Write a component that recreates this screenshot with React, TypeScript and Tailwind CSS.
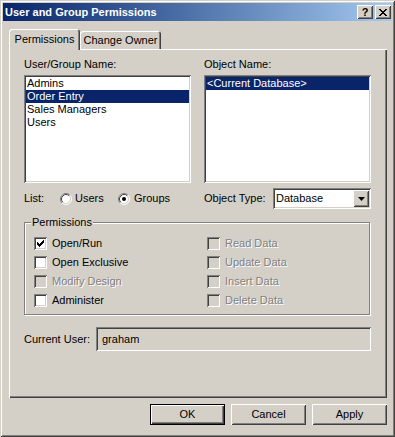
import React from "react";

const sunken =
  "shadow-[inset_1px_1px_0_#808080,inset_-1px_-1px_0_#ffffff,inset_2px_2px_0_#404040,inset_-2px_-2px_0_#d4d0c8]";
const raised =
  "shadow-[inset_1px_1px_0_#ffffff,inset_-1px_-1px_0_#404040,inset_2px_2px_0_#d4d0c8,inset_-2px_-2px_0_#808080]";
const disabledText = "text-[#808080] [text-shadow:1px_1px_0_#ffffff]";

function CheckMark() {
  return (
    <svg width="7" height="7" viewBox="0 0 7 7" shapeRendering="crispEdges">
      <rect x="6" y="0" width="1" height="1" />
      <rect x="5" y="1" width="2" height="1" />
      <rect x="0" y="2" width="1" height="1" />
      <rect x="4" y="2" width="3" height="1" />
      <rect x="0" y="3" width="2" height="1" />
      <rect x="3" y="3" width="3" height="1" />
      <rect x="0" y="4" width="5" height="1" />
      <rect x="1" y="5" width="3" height="1" />
      <rect x="2" y="6" width="1" height="1" />
    </svg>
  );
}

function CloseGlyph() {
  return (
    <svg width="8" height="7" viewBox="0 0 8 7" shapeRendering="crispEdges">
      <rect x="0" y="0" width="2" height="1" />
      <rect x="6" y="0" width="2" height="1" />
      <rect x="1" y="1" width="2" height="1" />
      <rect x="5" y="1" width="2" height="1" />
      <rect x="2" y="2" width="4" height="1" />
      <rect x="3" y="3" width="2" height="1" />
      <rect x="2" y="4" width="4" height="1" />
      <rect x="1" y="5" width="2" height="1" />
      <rect x="5" y="5" width="2" height="1" />
      <rect x="0" y="6" width="2" height="1" />
      <rect x="6" y="6" width="2" height="1" />
    </svg>
  );
}

function Radio({ checked }: { checked?: boolean }) {
  return (
    <svg width="12" height="12" viewBox="0 0 12 12">
      <circle cx="6" cy="6" r="5" fill="#ffffff" />
      <path d="M2.11 9.89 A5.5 5.5 0 0 1 9.89 2.11" fill="none" stroke="#808080" />
      <path d="M9.89 2.11 A5.5 5.5 0 0 1 2.11 9.89" fill="none" stroke="#ffffff" />
      <path d="M2.82 9.18 A4.5 4.5 0 0 1 9.18 2.82" fill="none" stroke="#404040" />
      <path d="M9.18 2.82 A4.5 4.5 0 0 1 2.82 9.18" fill="none" stroke="#d4d0c8" />
      {checked && <circle cx="6" cy="6" r="2" fill="#000000" />}
    </svg>
  );
}

function Check({
  label,
  checked,
  disabled,
}: {
  label: string;
  checked?: boolean;
  disabled?: boolean;
}) {
  return (
    <div className="flex h-[19px] items-center gap-[5px]">
      <div
        className={`flex h-[13px] w-[13px] items-center justify-center ${sunken} ${
          disabled ? "bg-[#d4d0c8]" : "bg-white"
        }`}
      >
        {checked && <CheckMark />}
      </div>
      <span className={disabled ? disabledText : ""}>{label}</span>
    </div>
  );
}

function ListRow({ text, selected }: { text: string; selected?: boolean }) {
  return (
    <div
      className={`h-[13px] px-[1px] whitespace-nowrap ${
        selected ? "bg-[#0a246a] text-white" : ""
      }`}
    >
      {text}
    </div>
  );
}

function PushButton({ label, isDefault }: { label: string; isDefault?: boolean }) {
  return (
    <div
      className={`flex h-[21px] w-[75px] items-center justify-center ${
        isDefault
          ? "shadow-[inset_0_0_0_1px_#000000,inset_2px_2px_0_#ffffff,inset_-2px_-2px_0_#404040,inset_-3px_-3px_0_#808080]"
          : raised
      }`}
    >
      {label}
    </div>
  );
}

export default function App() {
  return (
    <div className="flex h-[437px] w-[395px] flex-col bg-[#d4d0c8] p-[3px] text-[11px] leading-[13px] text-black [font-family:'Liberation_Sans',Arial,sans-serif] shadow-[inset_1px_1px_0_#d4d0c8,inset_-1px_-1px_0_#404040,inset_2px_2px_0_#ffffff,inset_-2px_-2px_0_#808080]">
      {/* title bar */}
      <div className="flex h-[18px] items-center bg-linear-to-r from-[#0a246a] to-[#a6caf0] pl-[2px] pr-[1px]">
        <span className="flex-1 font-bold text-white">User and Group Permissions</span>
        <div className="flex gap-[2px]">
          <div className={`flex h-[14px] w-[16px] items-center justify-center bg-[#d4d0c8] font-bold leading-none ${raised}`}>
            ?
          </div>
          <div className={`flex h-[14px] w-[16px] items-center justify-center bg-[#d4d0c8] ${raised}`}>
            <CloseGlyph />
          </div>
        </div>
      </div>

      {/* tabs */}
      <div className="ml-[6px] mt-[8px] flex h-[20px] items-end">
        <div className="relative z-10 -mb-px flex h-[21px] w-[71px] items-center justify-center rounded-t-[3px] bg-[#d4d0c8] shadow-[inset_1px_1px_0_#ffffff,inset_-1px_0_0_#404040,inset_-2px_0_0_#808080]">
          Permissions
        </div>
        <div className="flex h-[18px] w-[81px] items-center justify-center rounded-t-[3px] pt-[1px] shadow-[inset_1px_1px_0_#ffffff,inset_-1px_0_0_#404040,inset_-2px_0_0_#808080]">
          Change Owner
        </div>
      </div>

      {/* panel */}
      <div className="ml-[6px] h-[349px] w-[378px] pl-[15px] pt-[9px] shadow-[inset_1px_1px_0_#ffffff,inset_-1px_-1px_0_#404040,inset_-2px_-2px_0_#808080]">
        <div className="flex gap-[13px]">
          <div className="w-[167px]">
            <div>User/Group Name:</div>
            <div className={`mt-[4px] h-[108px] bg-white p-[2px] ${sunken}`}>
              <ListRow text="Admins" />
              <ListRow text="Order Entry" selected />
              <ListRow text="Sales Managers" />
              <ListRow text="Users" />
            </div>
          </div>
          <div className="w-[167px]">
            <div>Object Name:</div>
            <div className={`mt-[4px] h-[108px] bg-white p-[2px] ${sunken}`}>
              <ListRow text="<Current Database>" selected />
            </div>
          </div>
        </div>

        <div className="mt-[5px] flex h-[21px] gap-[13px]">
          <div className="flex w-[167px] items-center">
            <span className="w-[36px]">List:</span>
            <div className="flex w-[58px] items-center gap-[3px]">
              <Radio />
              <span>Users</span>
            </div>
            <div className="flex items-center gap-[4px]">
              <Radio checked />
              <span>Groups</span>
            </div>
          </div>
          <div className="flex w-[167px] items-center">
            <span>Object Type:</span>
            <div className={`ml-auto flex h-[21px] w-[98px] bg-white p-[2px] ${sunken}`}>
              <span className="flex-1 pl-[1px] leading-[17px]">Database</span>
              <div className={`flex h-[17px] w-[16px] items-center justify-center bg-[#d4d0c8] ${raised}`}>
                <svg width="7" height="4" viewBox="0 0 7 4">
                  <polygon points="0,0 7,0 3.5,4" fill="#000000" />
                </svg>
              </div>
            </div>
          </div>
        </div>

        {/* permissions group */}
        <div className="mt-[13px] w-[346px] border border-[#808080] pb-[4px] pl-[9px] shadow-[inset_1px_1px_0_#ffffff,1px_1px_0_#ffffff]">
          <div className="-mt-[7px] -ml-[3px] w-fit bg-[#d4d0c8] px-[1px]">Permissions</div>
          <div className="mt-[5px] flex">
            <div className="w-[173px]">
              <Check label="Open/Run" checked />
              <Check label="Open Exclusive" />
              <Check label="Modify Design" disabled />
              <Check label="Administer" />
            </div>
            <div>
              <Check label="Read Data" disabled />
              <Check label="Update Data" disabled />
              <Check label="Insert Data" disabled />
              <Check label="Delete Data" disabled />
            </div>
          </div>
        </div>

        <div className="mt-[12px] flex h-[24px] w-[347px] items-center">
          <span>Current User:</span>
          <div className={`ml-auto h-[24px] w-[275px] bg-[#d4d0c8] pl-[6px] leading-[24px] ${sunken}`}>
            graham
          </div>
        </div>
      </div>

      {/* buttons */}
      <div className="ml-[6px] mt-[6px] flex w-[378px] justify-end gap-[6px]">
        <PushButton label="OK" isDefault />
        <PushButton label="Cancel" />
        <PushButton label="Apply" />
      </div>
    </div>
  );
}
